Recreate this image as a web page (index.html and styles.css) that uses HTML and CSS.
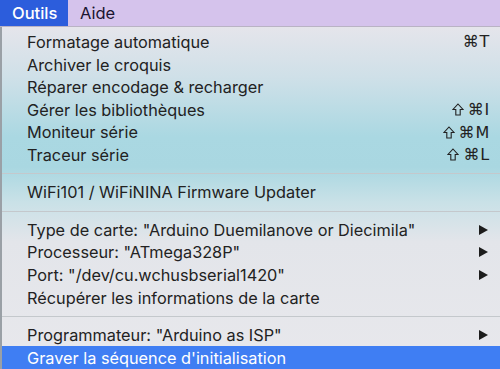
FILE: index.html
```html
<!DOCTYPE html>
<html lang="fr">
<head>
<meta charset="utf-8">
<link rel="stylesheet" href="styles.css">
</head>
<body>
<div class="menubar">
  <div class="mtitle active">Outils</div>
  <div class="mtitle">Aide</div>
</div>
<div class="panel">
  <div class="item"><span>Formatage automatique</span><span class="key">⌘T</span></div>
  <div class="item"><span>Archiver le croquis</span></div>
  <div class="item"><span>Réparer encodage &amp; recharger</span></div>
  <div class="item"><span>Gérer les bibliothèques</span><span class="key"><svg class="sh" viewBox="0 0 12 13" width="12" height="13"><path d="M6 1 L11 6.5 H8.2 V12 H3.8 V6.5 H1 Z" fill="none" stroke="#222" stroke-width="1.1" stroke-linejoin="miter"/></svg>⌘I</span></div>
  <div class="item"><span>Moniteur série</span><span class="key"><svg class="sh" viewBox="0 0 12 13" width="12" height="13"><path d="M6 1 L11 6.5 H8.2 V12 H3.8 V6.5 H1 Z" fill="none" stroke="#222" stroke-width="1.1" stroke-linejoin="miter"/></svg>⌘M</span></div>
  <div class="item"><span>Traceur série</span><span class="key"><svg class="sh" viewBox="0 0 12 13" width="12" height="13"><path d="M6 1 L11 6.5 H8.2 V12 H3.8 V6.5 H1 Z" fill="none" stroke="#222" stroke-width="1.1" stroke-linejoin="miter"/></svg>⌘L</span></div>
  <div class="sep"></div>
  <div class="item"><span>WiFi101 / WiFiNINA Firmware Updater</span></div>
  <div class="sep"></div>
  <div class="item"><span>Type de carte: "Arduino Duemilanove or Diecimila"</span><span class="arrow"></span></div>
  <div class="item"><span>Processeur: "ATmega328P"</span><span class="arrow"></span></div>
  <div class="item"><span>Port: "/dev/cu.wchusbserial1420"</span><span class="arrow"></span></div>
  <div class="item"><span>Récupérer les informations de la carte</span></div>
  <div class="sep"></div>
  <div class="item"><span>Programmateur: "Arduino as ISP"</span><span class="arrow"></span></div>
  <div class="item selected"><span>Graver la séquence d'initialisation</span></div>
</div>
</body>
</html>
```
FILE: styles.css
```css
html, body {
  margin: 0;
  padding: 0;
  width: 500px;
  height: 369px;
  overflow: hidden;
  background: #9aa0a6;
  font-family: "Inter", "Liberation Sans", sans-serif;
}
.menubar {
  background: #d5c3ec;
  border-bottom: 1px solid #b9b3c4;
  display: flex;
  align-items: stretch;
  box-sizing: border-box;
  height: 27px;
}
.mtitle {
  padding: 0 12px;
  font-size: 16.5px;
  line-height: 26px;
  color: #1b1430;
}
.mtitle.active {
  background: #2c5ddc;
  color: #ffffff;
  font-weight: 500;
  width: 68px;
  box-sizing: border-box;
}
.panel {
  margin-left: 2px;
  height: 342px;
  padding-top: 3.7px;
  box-sizing: border-box;
  background: linear-gradient(180deg, #e5e5eb 0px, #cfe0e8 50px, #aad8e2 110px, #a9d7e1 140px, #c9e1e7 175px, #e3e5ea 215px, #e8e8ec 342px);
  color: #222222;
  font-size: 16.3px;
}
.item {
  height: 22.6px;
  display: flex;
  align-items: center;
  justify-content: space-between;
  padding: 0 10px 0 25px;
  white-space: nowrap;
}
.key {
  display: flex;
  align-items: center;
  font-family: "DejaVu Sans", sans-serif;
  font-size: 16px;
  letter-spacing: 0.8px;
  color: #222;
}
.sh { margin-right: 4px; }
.arrow {
  width: 0;
  height: 0;
  border-top: 5px solid transparent;
  border-bottom: 5px solid transparent;
  border-left: 9px solid #1c1c1c;
  margin-right: 2px;
}
.sep {
  height: 14.8px;
  display: flex;
  align-items: center;
}
.sep::before {
  content: "";
  flex: 1;
  height: 1px;
  background: #c4c8cc;
}
.item.selected {
  background: #3f7ef3;
  color: #ffffff;
}
```
